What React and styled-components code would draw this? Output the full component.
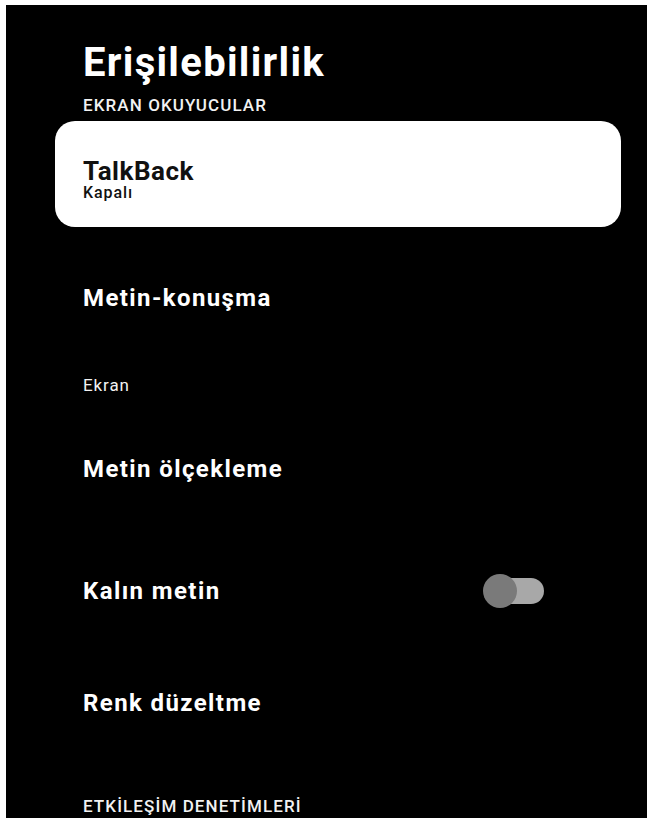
import React from 'react';
import styled, { createGlobalStyle } from 'styled-components';

const GlobalStyle = createGlobalStyle`
  html, body {
    margin: 0;
    padding: 0;
    background: #ffffff;
    overflow: hidden;
  }
  body {
    font-family: Roboto, "Noto Sans", "Liberation Sans", sans-serif;
  }
`;

const Screen = styled.div`
  height: 818px;
  padding: 5px 3px 0 6px;
  box-sizing: border-box;
`;

const Panel = styled.div`
  height: 100%;
  background: #000;
  color: #fff;
  padding: 36px 26px 0 49px;
  box-sizing: border-box;
  overflow: hidden;
  display: flex;
  flex-direction: column;
`;

const Title = styled.h1`
  margin: 0 0 0 28px;
  font-size: 40px;
  line-height: 44px;
  font-weight: 700;
  letter-spacing: 1.3px;
`;

const SectionLabel = styled.div`
  flex: none;
  height: ${({ $h }) => $h}px;
  margin-top: ${({ $top }) => $top || 0}px;
  padding-left: 28px;
  display: flex;
  align-items: center;
  font-size: 17px;
  letter-spacing: ${({ $caps }) => ($caps ? 1.1 : 0.9)}px;
  font-weight: ${({ $caps }) => ($caps ? 500 : 400)};
  color: #f2f2f2;
`;

const FocusCard = styled.div`
  flex: none;
  height: 106px;
  margin-top: 6px;
  padding: 37px 28px 0;
  box-sizing: border-box;
  background: #fff;
  border-radius: 20px;
  color: #111;
`;

const CardTitle = styled.div`
  font-size: 26px;
  line-height: 26px;
  font-weight: 700;
  letter-spacing: 0.5px;
`;

const CardSub = styled.div`
  font-size: 16px;
  line-height: 18px;
  font-weight: 500;
  letter-spacing: 0.9px;
`;

const Row = styled.div`
  flex: none;
  height: ${({ $h }) => $h}px;
  padding: 0 77px 0 28px;
  display: flex;
  align-items: center;
  justify-content: space-between;
  font-size: 24px;
  font-weight: 700;
  letter-spacing: 1.4px;
`;

const Toggle = styled.div`
  position: relative;
  width: 61px;
  height: 34px;
  flex: none;

  &::before {
    content: '';
    position: absolute;
    left: 13px;
    right: 0;
    top: 4px;
    height: 26px;
    border-radius: 13px;
    background: #a8a8a8;
  }

  &::after {
    content: '';
    position: absolute;
    left: 0;
    top: 0;
    width: 34px;
    height: 34px;
    border-radius: 50%;
    background: #7a7a7a;
  }
`;

export default function App() {
  return (
    <>
      <GlobalStyle />
      <Screen>
        <Panel>
          <Title>Erişilebilirlik</Title>
          <SectionLabel $h={20} $top={10} $caps>
            EKRAN OKUYUCULAR
          </SectionLabel>
          <FocusCard>
            <CardTitle>TalkBack</CardTitle>
            <CardSub>Kapalı</CardSub>
          </FocusCard>
          <Row $h={142}>Metin-konuşma</Row>
          <SectionLabel $h={32}>Ekran</SectionLabel>
          <Row $h={136}>Metin ölçekleme</Row>
          <Row $h={107}>
            Kalın metin
            <Toggle />
          </Row>
          <Row $h={118}>Renk düzeltme</Row>
          <SectionLabel $h={88} $caps>
            ETKİLEŞİM DENETİMLERİ
          </SectionLabel>
        </Panel>
      </Screen>
    </>
  );
}
